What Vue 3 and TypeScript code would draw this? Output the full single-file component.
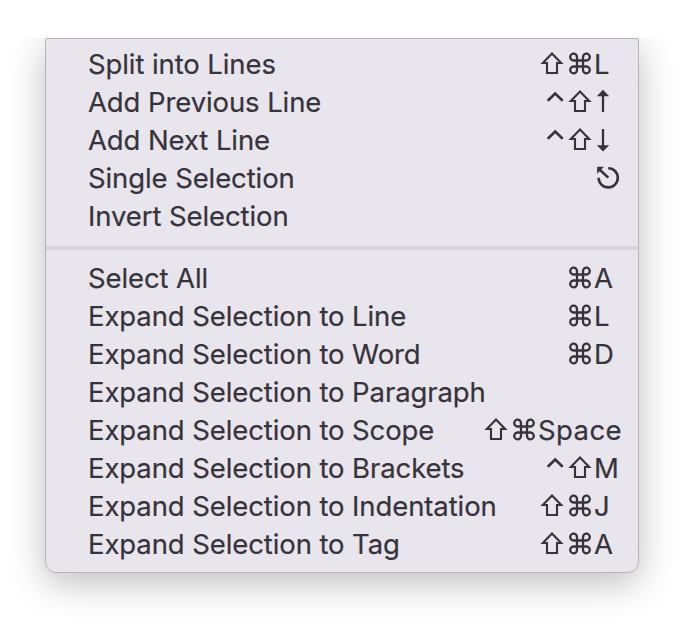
<script setup lang="ts">
type Glyph = 'shift' | 'command' | 'control' | 'up' | 'down' | 'escape'

interface MenuItem {
  label: string
  glyphs: Glyph[]
  char?: string
}

const groups: MenuItem[][] = [
  [
    { label: 'Split into Lines', glyphs: ['shift', 'command'], char: 'L' },
    { label: 'Add Previous Line', glyphs: ['control', 'shift', 'up'] },
    { label: 'Add Next Line', glyphs: ['control', 'shift', 'down'] },
    { label: 'Single Selection', glyphs: ['escape'] },
    { label: 'Invert Selection', glyphs: [] },
  ],
  [
    { label: 'Select All', glyphs: ['command'], char: 'A' },
    { label: 'Expand Selection to Line', glyphs: ['command'], char: 'L' },
    { label: 'Expand Selection to Word', glyphs: ['command'], char: 'D' },
    { label: 'Expand Selection to Paragraph', glyphs: [] },
    { label: 'Expand Selection to Scope', glyphs: ['shift', 'command'], char: 'Space' },
    { label: 'Expand Selection to Brackets', glyphs: ['control', 'shift'], char: 'M' },
    { label: 'Expand Selection to Indentation', glyphs: ['shift', 'command'], char: 'J' },
    { label: 'Expand Selection to Tag', glyphs: ['shift', 'command'], char: 'A' },
  ],
]
</script>

<template>
  <main class="stage">
    <div class="menu" role="menu">
      <ul v-for="(group, g) in groups" :key="g" class="group">
        <li v-for="item in group" :key="item.label" class="item" role="menuitem">
          <span class="label">{{ item.label }}</span>
          <span class="shortcut">
            <svg v-for="glyph in item.glyphs" :key="glyph" class="glyph" viewBox="0 0 28 38">
              <path v-if="glyph === 'shift'" class="line thin" d="M14 8.5L4.8 18H9V28H19V18H23.2Z" />
              <path
                v-else-if="glyph === 'command'"
                class="line"
                d="M11 15.5H7.5A3.4 3.4 0 1 1 11 12V25A3.4 3.4 0 1 1 7.5 21.5H20.5A3.4 3.4 0 1 1 17 25V12A3.4 3.4 0 1 1 20.5 15.5Z"
              />
              <path v-else-if="glyph === 'control'" class="line bold" d="M9.7 17.8L17.2 10.5L24.7 17.8" />
              <template v-else-if="glyph === 'up'">
                <path class="line" d="M9 12V29" />
                <path class="solid" d="M9 6.8L15.2 13.2H2.8Z" />
              </template>
              <template v-else-if="glyph === 'down'">
                <path class="line" d="M9 8V26" />
                <path class="solid" d="M9 30.6L15.2 24.2H2.8Z" />
              </template>
              <template v-else>
                <path class="line bold" d="M14.2 9.2A9.6 9.6 0 1 1 4.6 18.8M14.3 18.6L6 11" />
                <path class="solid" d="M3.1 7.8H10L3.1 14.7Z" />
              </template>
            </svg>
            <span v-if="item.char" class="char" :class="{ word: item.char.length > 1 }">{{ item.char }}</span>
          </span>
        </li>
      </ul>
    </div>
  </main>
</template>

<style>
body {
  margin: 0;
  background: #fff;
}
</style>

<style scoped>
.stage {
  box-sizing: border-box;
  width: 684px;
  height: 626px;
  padding: 38px 45px 53px;
  overflow: hidden;
  background: #fff;
}

.menu {
  box-sizing: border-box;
  width: 594px;
  height: 535px;
  padding-top: 6px;
  border: 1px solid #b5b4b9;
  border-radius: 2px 2px 11px 11px;
  background: #e8e5ec;
  box-shadow: 0 10px 36px rgba(0, 0, 0, 0.26);
  clip-path: inset(0 -45px -53px -45px);
  color: #37333b;
  font-family: Inter, 'Liberation Sans', sans-serif;
  font-size: 27.5px;
  line-height: 38px;
  -webkit-text-stroke: 0.2px #37333b;
}

.group {
  margin: 0;
  padding: 0;
  list-style: none;
}

.group + .group {
  margin-top: 11px;
  padding-top: 9px;
  border-top: 4px solid #d8d5dc;
}

.item {
  display: flex;
  justify-content: space-between;
  height: 38px;
  padding: 0 16px 0 42px;
  white-space: nowrap;
}

.label {
  letter-spacing: -0.1px;
}

.shortcut {
  display: flex;
}

.glyph {
  display: block;
  width: 28px;
  height: 38px;
}

.char {
  min-width: 28px;
}

.word {
  letter-spacing: 0.4px;
}

.line {
  fill: none;
  stroke: #37333b;
  stroke-width: 2.3;
}

.thin {
  stroke-width: 2.1;
}

.bold {
  stroke-width: 2.6;
}

.solid {
  fill: #37333b;
}
</style>
